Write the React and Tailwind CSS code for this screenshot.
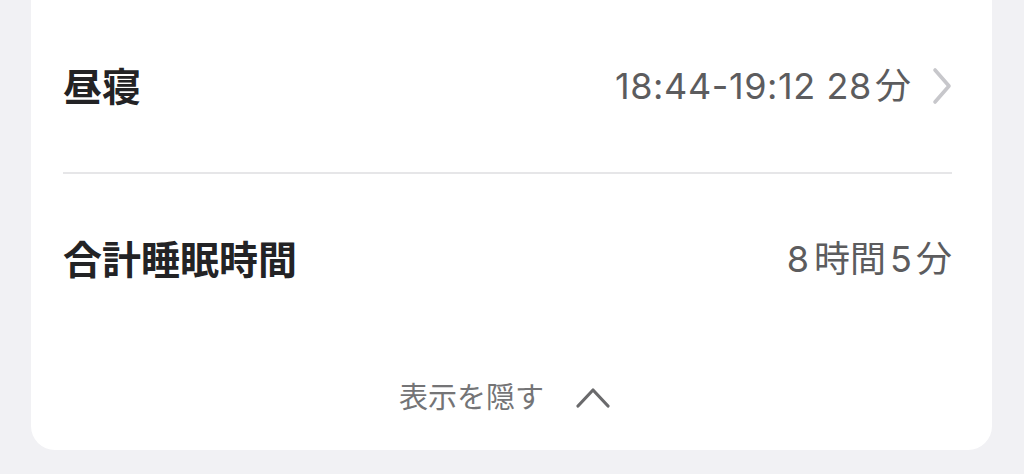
const jp = '[font-family:Inter,"Noto_Sans_CJK_JP",sans-serif]';

const Chevron = ({ dir = 'right', className }) =>
  dir === 'right' ? (
    <svg viewBox="0 0 20 38" className={className} fill="none" stroke="currentColor" strokeWidth="3.6" strokeLinecap="round" strokeLinejoin="round">
      <path d="M3 3 L17 19 L3 35" />
    </svg>
  ) : (
    <svg viewBox="0 0 34 21" className={className} fill="none" stroke="currentColor" strokeWidth="3.2" strokeLinecap="round" strokeLinejoin="round">
      <path d="M2 19 L17 3 L32 19" />
    </svg>
  );

const SleepRow = ({ label, children, height }) => (
  <div className={`flex items-center justify-between ${height}`}>
    <span className="text-[39px] font-bold text-[#232325] leading-none">{label}</span>
    <div className="flex items-center text-[36px] text-[#5c5c5e] leading-none">{children}</div>
  </div>
);

export default function App() {
  return (
    <div className={`min-h-[474px] bg-[#f1f1f4] ${jp}`}>
      <div className="ml-[31px] w-[961px] bg-white rounded-b-[24px] pl-[32px] pr-[40px]">
        <SleepRow label="昼寝" height="h-[172px]">
          <span className="tracking-[0.6px]">18:44-19:12 28</span>
          <span className="ml-[3px]">分</span>
          <Chevron className="ml-[21px] w-[20px] h-[38px] text-[#c7c7cb]" />
        </SleepRow>

        <div className="h-[2px] bg-[#e6e6e8]" />

        <SleepRow label="合計睡眠時間" height="h-[170px]">
          <span>8</span>
          <span className="ml-[5px]">時間</span>
          <span className="ml-[4px]">5</span>
          <span className="ml-[4px]">分</span>
        </SleepRow>

        <button type="button" className="flex w-full h-[106px] items-center justify-center gap-[32px] pr-[6px] text-[#747476]">
          <span className="text-[29px] leading-none">表示を隠す</span>
          <Chevron dir="up" className="w-[34px] h-[21px] text-[#6a6a6c]" />
        </button>
      </div>
    </div>
  );
}
